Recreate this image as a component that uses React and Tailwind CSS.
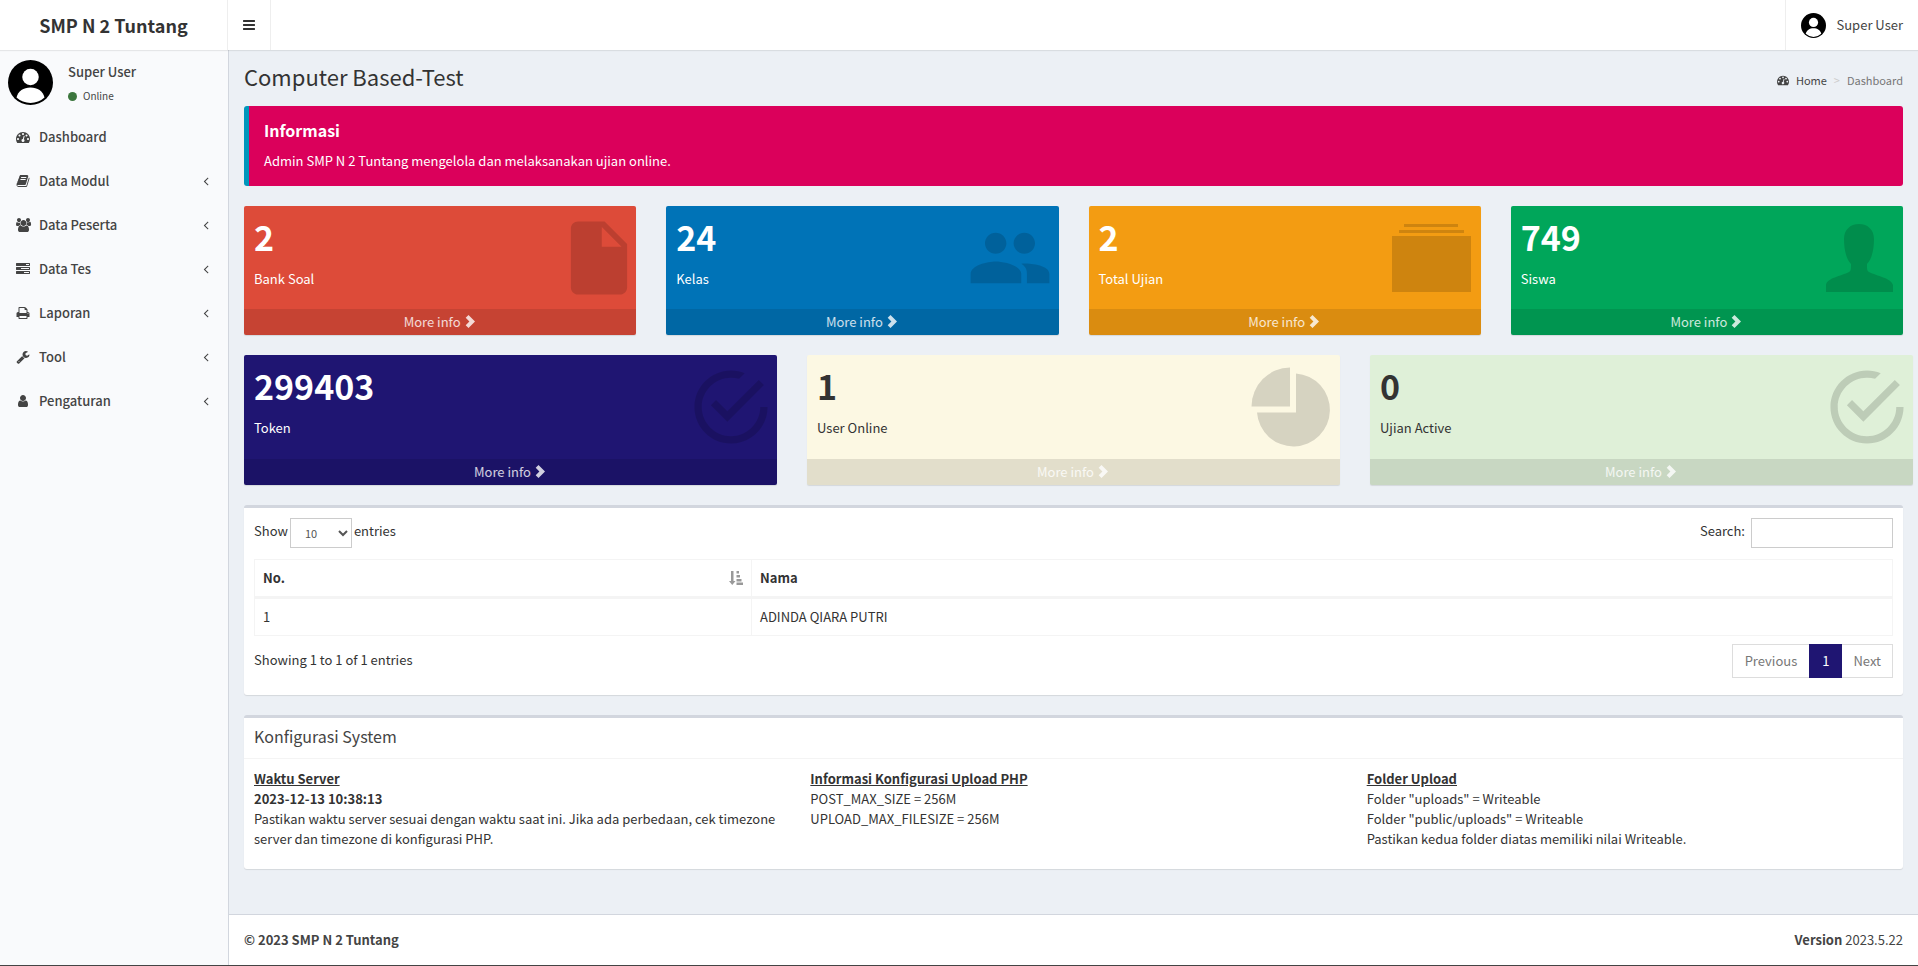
import React from "react";
import { IoMdDocument, IoMdPeople, IoMdCheckmarkCircleOutline } from "react-icons/io";

/* Sidebar glyphs, drawn on a 1792 unit grid */
const GLYPHS = {
  dashboard:
    "M384 1152q0-53-37.5-90.5t-90.5-37.5-90.5 37.5-37.5 90.5 37.5 90.5 90.5 37.5 90.5-37.5 37.5-90.5zm192-448q0-53-37.5-90.5t-90.5-37.5-90.5 37.5-37.5 90.5 37.5 90.5 90.5 37.5 90.5-37.5 37.5-90.5zm428 481l101-382q6-26-7.5-48.5t-38.5-29.5-48 6.5-30 39.5l-101 382q-60 5-107 43.5t-63 98.5q-20 77 20 146t117 89 146-20 89-117q16-60-6-117t-72-91zm660-33q0-53-37.5-90.5t-90.5-37.5-90.5 37.5-37.5 90.5 37.5 90.5 90.5 37.5 90.5-37.5 37.5-90.5zm-640-640q0-53-37.5-90.5t-90.5-37.5-90.5 37.5-37.5 90.5 37.5 90.5 90.5 37.5 90.5-37.5 37.5-90.5zm448 192q0-53-37.5-90.5t-90.5-37.5-90.5 37.5-37.5 90.5 37.5 90.5 90.5 37.5 90.5-37.5 37.5-90.5zm320 448q0 261-141 483-19 29-54 29h-1402q-35 0-54-29-141-221-141-483 0-182 71-348t191-286 286-191 348-71 348 71 286 191 191 286 71 348z",
  book: "M1703 478q40 57 18 129l-275 906q-19 64-76.5 107.5t-122.5 43.5h-923q-77 0-148.5-53.5t-99.5-131.5q-24-67-2-127 0-4 3-27t4-37q1-8-3-21.5t-3-19.5q2-11 8-21t16.5-23.5 16.5-23.5q23-38 45-91.5t30-91.5q3-10 .5-30t-.5-28q3-11 17-28t17-23q21-36 42-92t25-90q1-9-2.5-32t.5-28q4-13 22-30.5t22-22.5q19-26 42.5-84.5t27.5-96.5q1-8-3-25.5t-2-26.5q2-8 9-18t18-23 17-21q8-12 16.5-30.5t15-35 16-36 19.5-32 26.5-23.5 36-11.5 47.5 5.5l-1 3q38-9 51-9h761q74 0 114 56t18 130l-274 906q-36 119-71.5 153.5t-128.5 34.5h-869q-27 0-38 15-11 16-1 43 24 70 144 70h923q29 0 56-15.5t35-41.5l300-987q7-22 5-57 38 15 59 43zm-1064 2q-4 13 2 22.5t20 9.5h608q13 0 25.5-9.5t16.5-22.5l21-64q4-13-2-22.5t-20-9.5h-608q-13 0-25.5 9.5t-16.5 22.5zm-83 256q-4 13 2 22.5t20 9.5h608q13 0 25.5-9.5t16.5-22.5l21-64q4-13-2-22.5t-20-9.5h-608q-13 0-25.5 9.5t-16.5 22.5z",
  users:
    "M593 896q-162 5-265 128h-134q-82 0-138-40.5t-56-118.5q0-353 124-353 6 0 43.5 21t97.5 42.5 119 21.5q67 0 133-23-5 37-5 66 0 159 93 294zm1071 637q0 120-73 189.5t-194 69.5h-874q-121 0-194-69.5t-73-189.5q0-53 3.5-103.5t14-109 26.5-108.5 43-97.5 62-81 85.5-53.5 111.5-20q10 0 43 21.5t73 48 107 48 135 21.5 135-21.5 107-48 73-48 43-21.5q61 0 111.5 20t85.5 53.5 62 81 43 97.5 26.5 108.5 14 109 3.5 103.5zm-1024-1277q0 106-75 181t-181 75-181-75-75-181 75-181 181-75 181 75 75 181zm704 384q0 159-112.5 271.5t-271.5 112.5-271.5-112.5-112.5-271.5 112.5-271.5 271.5-112.5 271.5 112.5 112.5 271.5zm576 225q0 78-56 118.5t-138 40.5h-134q-103-123-265-128 93-135 93-294 0-29-5-66 66 23 133 23 59 0 119-21.5t97.5-42.5 43.5-21q124 0 124 353zm-128-609q0 106-75 181t-181 75-181-75-75-181 75-181 181-75 181 75 75 181z",
  tasks:
    "M1024 1408h640v-128h-640v128zm-384-512h1024v-128h-1024v128zm640-512h384v-128h-384v128zm512 832v256q0 26-19 45t-45 19h-1664q-26 0-45-19t-19-45v-256q0-26 19-45t45-19h1664q26 0 45 19t19 45zm0-512v256q0 26-19 45t-45 19h-1664q-26 0-45-19t-19-45v-256q0-26 19-45t45-19h1664q26 0 45 19t19 45zm0-512v256q0 26-19 45t-45 19h-1664q-26 0-45-19t-19-45v-256q0-26 19-45t45-19h1664q26 0 45 19t19 45z",
  print:
    "M448 1536h896v-256h-896v256zm0-640h896v-384h-160q-40 0-68-28t-28-68v-160h-640v640zm1152 64q0-26-19-45t-45-19-45 19-19 45 19 45 45 19 45-19 19-45zm128 0v416q0 13-9.5 22.5t-22.5 9.5h-224v160q0 40-28 68t-68 28h-960q-40 0-68-28t-28-68v-160h-224q-13 0-22.5-9.5t-9.5-22.5v-416q0-79 56.5-135.5t135.5-56.5h64v-544q0-40 28-68t68-28h672q40 0 88 20t76 48l152 152q28 28 48 76t20 88v256h64q79 0 135.5 56.5t56.5 135.5z",
  wrench:
    "M448 1472q0-26-19-45t-45-19-45 19-19 45 19 45 45 19 45-19 19-45zm644-420l-682 682q-37 37-90 37-52 0-91-37l-106-108q-38-36-38-90 0-53 38-91l681-681q39 98 114.5 173.5t173.5 114.5zm634-435q0 39-23 106-47 134-164.5 217.5t-258.5 83.5q-185 0-316.5-131.5t-131.5-316.5 131.5-316.5 316.5-131.5q58 0 121.5 16.5t107.5 46.5q16 11 16 28t-16 28l-293 169v224l193 107q5-3 79-48.5t135.5-81 70.5-35.5q15 0 23.5 10t8.5 25z",
  user: "M1536 1399q0 109-62.5 187t-150.5 78h-854q-88 0-150.5-78t-62.5-187q0-85 8.5-160.5t31.5-152 58.5-131 94-89 134.5-34.5q131 128 313 128t313-128q76 0 134.5 34.5t94 89 58.5 131 31.5 152 8.5 160.5zm-256-887q0 159-112.5 271.5t-271.5 112.5-271.5-112.5-112.5-271.5 112.5-271.5 271.5-112.5 271.5 112.5 112.5 271.5z",
  angleLeft:
    "M1203 544q0 13-10 23l-393 393 393 393q10 10 10 23t-10 23l-50 50q-10 10-23 10t-23-10l-466-466q-10-10-10-23t10-23l466-466q10-10 23-10t23 10l50 50q10 10 10 23z",
  bars: "M1664 1344v128q0 26-19 45t-45 19h-1408q-26 0-45-19t-19-45v-128q0-26 19-45t45-19h1408q26 0 45 19t19 45zm0-512v128q0 26-19 45t-45 19h-1408q-26 0-45-19t-19-45v-128q0-26 19-45t45-19h1408q26 0 45 19t19 45zm0-512v128q0 26-19 45t-45 19h-1408q-26 0-45-19t-19-45v-128q0-26 19-45t45-19h1408q26 0 45 19t19 45z",
};

const MENU = [
  { label: "Dashboard", icon: "dashboard" },
  { label: "Data Modul", icon: "book", tree: true },
  { label: "Data Peserta", icon: "users", tree: true },
  { label: "Data Tes", icon: "tasks", tree: true },
  { label: "Laporan", icon: "print", tree: true },
  { label: "Tool", icon: "wrench", tree: true },
  { label: "Pengaturan", icon: "user", tree: true },
];

const STATS = [
  { value: "2", label: "Bank Soal", Icon: IoMdDocument, place: "-right-2", tone: "bg-[#dd4b39] text-white" },
  { value: "24", label: "Kelas", Icon: IoMdPeople, place: "right-1", tone: "bg-[#0073b7] text-white" },
  { value: "2", label: "Total Ujian", Icon: AlbumsIcon, place: "right-[10px]", tone: "bg-[#f39c12] text-white" },
  { value: "749", label: "Siswa", Icon: PersonIcon, place: "right-[10px]", tone: "bg-[#00a65a] text-white" },
];

const STATUS = [
  { value: "299403", label: "Token", Icon: IoMdCheckmarkCircleOutline, place: "right-px", tone: "bg-[#1f1572] text-white" },
  { value: "1", label: "User Online", Icon: PieIcon, place: "right-1", tone: "bg-[#fcf8e3] text-[#333]" },
  { value: "0", label: "Ujian Active", Icon: IoMdCheckmarkCircleOutline, place: "right-px", tone: "-mr-[10px] bg-[#dff0d8] text-[#333]" },
];

function Glyph({ name, className }) {
  return (
    <svg viewBox="0 0 1792 1792" className={className} fill="currentColor" overflow="visible" aria-hidden="true">
      <path d={GLYPHS[name]} />
    </svg>
  );
}

function AlbumsIcon({ className }) {
  return (
    <svg viewBox="0 0 90 90" className={className} fill="currentColor" aria-hidden="true">
      <path d="M23 11H77V14H23ZM18 17H83V20H18ZM11 23H90V79H11Z" />
    </svg>
  );
}

function PersonIcon({ className }) {
  return (
    <svg viewBox="0 0 90 90" className={className} fill="currentColor" aria-hidden="true">
      <path d="M23 79V72C24 65 38 63 46 59C48 58 48 56 48 51C43 46 41 36 41 26C41 17 47 11 56 11S71 17 71 26C71 36 69 46 64 51C64 56 64 58 66 59C74 63 88 65 90 72V79Z" />
    </svg>
  );
}

function PieIcon({ className }) {
  return (
    <svg viewBox="0 0 90 90" className={className} fill="currentColor" aria-hidden="true">
      <path d="M44 5.500V44.500H5.500A39 39 0 0 1 44 5.500Z" />
      <path d="M50 11.500A36.500 36.500 0 1 1 11 50.500H50Z" />
    </svg>
  );
}

function Avatar({ className }) {
  return (
    <svg viewBox="0 0 90 90" className={className} aria-hidden="true">
      <circle cx="45" cy="45" r="45" fill="#000" />
      <circle cx="45" cy="34" r="16.500" fill="#fff" />
      <path d="M17 75C20 62 31 55 45 55S70 62 73 75A41 41 0 0 1 17 75Z" fill="#fff" />
    </svg>
  );
}

function ChevronRight() {
  return (
    <svg viewBox="0 0 14 14" className="size-[14px]" fill="currentColor" aria-hidden="true">
      <path d="M2.700 2.800 5.500 0 12 6.500 5.500 13 2.700 10.200 6.400 6.500Z" />
    </svg>
  );
}

function SortIcon() {
  return (
    <svg viewBox="0 0 14 14" className="size-[14px] text-[#999]" fill="currentColor" aria-hidden="true">
      <path d="M2 0h2.500v10H6.500L3.250 14 0 10H2ZM7.500 0h2.500v2.500H7.500ZM7.500 4h3.500v2.500H7.500ZM7.500 8h5v2.500H7.500ZM7.500 11.500h6.500V14H7.500Z" />
    </svg>
  );
}

function Header() {
  return (
    <header className="relative z-10 flex h-[50px] shrink-0 bg-white shadow-[0_1px_1px_rgba(0,0,0,0.08)]">
      <a href="#" className="flex w-[228px] items-center justify-center border-r border-[#eee] text-lg font-bold text-[#333]">
        SMP N 2 Tuntang
      </a>
      <button type="button" aria-label="Toggle navigation" className="flex w-[43px] items-center justify-center border-r border-[#eee] text-[#333]">
        <Glyph name="bars" className="size-[14px]" />
      </button>
      <a href="#" className="ml-auto flex items-center gap-[10px] border-l border-[#eee] px-[15px] text-[#444]">
        <Avatar className="size-[25px]" />
        <span>Super User</span>
      </a>
    </header>
  );
}

function Sidebar() {
  return (
    <aside className="w-[229px] shrink-0 border-r border-[#d2d6de] bg-[#f9fafc] text-[#444]">
      <div className="flex h-[65px] items-center gap-[15px] px-2">
        <Avatar className="size-[45px]" />
        <div className="pt-[3px]">
          <p className="font-medium leading-5">Super User</p>
          <a href="#" className="mt-1 flex items-center gap-[6px] text-[10px] leading-5">
            <span className="size-[9px] rounded-full bg-[#3c763d]" />
            Online
          </a>
        </div>
      </div>
      <nav>
        <ul>
          {MENU.map((item) => (
            <li key={item.label}>
              <a href="#" className="flex h-11 items-center pl-4 pr-[15px] font-medium">
                <Glyph name={item.icon} className="size-[14px]" />
                <span className="ml-[9px] flex-1">{item.label}</span>
                {item.tree && <Glyph name="angleLeft" className="size-[14px]" />}
              </a>
            </li>
          ))}
        </ul>
      </nav>
    </aside>
  );
}

function SmallBox({ value, label, Icon, place, tone }) {
  return (
    <div className={`relative flex flex-col overflow-hidden rounded-xs shadow-[0_1px_1px_rgba(0,0,0,0.1)] ${tone}`}>
      <div className="flex-1 p-[10px]">
        <h3 className="text-[34px] font-bold leading-[42px]">{value}</h3>
        <p className="mt-[11px] leading-5">{label}</p>
      </div>
      <Icon className={`absolute top-[7px] size-[90px] text-black/15 ${place}`} />
      <a href="#" className="flex h-[26px] items-center justify-center gap-[2px] bg-black/10 text-white/80">
        More info <ChevronRight />
      </a>
    </div>
  );
}

function UserTable() {
  return (
    <section className="rounded-[3px] border-t-3 border-[#d2d6de] bg-white px-[10px] pb-[17px] pt-[10px] shadow-[0_1px_1px_rgba(0,0,0,0.1)]">
      <div className="flex justify-between">
        <label className="flex gap-[2px] leading-[26px]">
          Show
          <select className="h-[30px] w-[62px] border border-[#ccc] bg-white pl-[10px] text-[11px] text-[#555]">
            <option>10</option>
            <option>25</option>
            <option>50</option>
          </select>
          entries
        </label>
        <label className="flex gap-[6px] leading-[26px]">
          Search:
          <input type="search" className="h-[30px] w-[142px] border border-[#ccc] px-[10px]" />
        </label>
      </div>
      <table className="mt-[11px] w-full border-collapse text-left">
        <thead>
          <tr>
            <th className="w-[497px] border border-b-3 border-[#f4f4f4] p-2 font-bold leading-5">
              <span className="flex items-center justify-between">
                No. <SortIcon />
              </span>
            </th>
            <th className="border border-b-3 border-[#f4f4f4] p-2 font-bold leading-5">Nama</th>
          </tr>
        </thead>
        <tbody>
          <tr>
            <td className="border border-[#f4f4f4] p-2 leading-5">1</td>
            <td className="border border-[#f4f4f4] p-2 leading-5">ADINDA QIARA PUTRI</td>
          </tr>
        </tbody>
      </table>
      <div className="mt-2 flex justify-between">
        <p className="leading-8">Showing 1 to 1 of 1 entries</p>
        <div className="flex h-[34px] text-[#777]">
          <button type="button" className="border border-r-0 border-[#ddd] px-3">Previous</button>
          <button type="button" className="bg-[#1f1572] px-[13px] text-white">1</button>
          <button type="button" className="border border-l-0 border-[#ddd] px-[11px]">Next</button>
        </div>
      </div>
    </section>
  );
}

function SystemConfig() {
  return (
    <section className="rounded-[3px] border-t-3 border-[#d2d6de] bg-white shadow-[0_1px_1px_rgba(0,0,0,0.1)]">
      <h3 className="border-b border-[#f4f4f4] px-[10px] pb-3 pt-2 text-base leading-5 text-[#444]">Konfigurasi System</h3>
      <div className="grid grid-cols-3 gap-[30px] px-[10px] pb-5 pt-[10px] leading-5">
        <div>
          <h4 className="font-bold underline">Waktu Server</h4>
          <p className="font-bold">2023-12-13 10:38:13</p>
          <p>
            Pastikan waktu server sesuai dengan waktu saat ini. Jika ada perbedaan, cek timezone
            server dan timezone di konfigurasi PHP.
          </p>
        </div>
        <div>
          <h4 className="font-bold underline">Informasi Konfigurasi Upload PHP</h4>
          <p>POST_MAX_SIZE = 256M</p>
          <p>UPLOAD_MAX_FILESIZE = 256M</p>
        </div>
        <div>
          <h4 className="font-bold underline">Folder Upload</h4>
          <p>Folder "uploads" = Writeable</p>
          <p>Folder "public/uploads" = Writeable</p>
          <p>Pastikan kedua folder diatas memiliki nilai Writeable.</p>
        </div>
      </div>
    </section>
  );
}

export default function App() {
  return (
    <div className="flex min-h-screen flex-col overflow-x-hidden border-b border-[#444] bg-[#ecf0f5] font-['Noto_Sans_CJK_SC',sans-serif] text-[13px] leading-5 text-[#333]">
      <Header />
      <div className="flex flex-1">
        <Sidebar />
        <div className="flex min-w-0 flex-1 flex-col">
          <main className="flex-1 px-[15px] pb-10">
            <div className="flex items-start justify-between pb-4 pt-3">
              <h1 className="text-[22px] leading-7">Computer Based-Test</h1>
              <nav aria-label="Breadcrumb" className="mt-2 flex items-center gap-[7px] text-[11px]">
                <a href="#" className="flex items-center gap-[7px] text-[#444]">
                  <Glyph name="dashboard" className="size-3" />
                  Home
                </a>
                <span className="text-[#ccc]">&gt;</span>
                <span className="text-[#777]">Dashboard</span>
              </nav>
            </div>
            <div className="rounded-[3px] border-l-5 border-[#0097bc] bg-[#db005b] pb-[15px] pl-[15px] pr-[30px] pt-[14px] text-white">
              <h4 className="text-base font-bold leading-5">Informasi</h4>
              <p className="mt-[11px] leading-5">Admin SMP N 2 Tuntang mengelola dan melaksanakan ujian online.</p>
            </div>
            <div className="mt-5 grid auto-rows-[129px] grid-cols-4 gap-[30px]">
              {STATS.map((box) => (
                <SmallBox key={box.label} {...box} />
              ))}
            </div>
            <div className="mb-5 mt-5 grid auto-rows-[130px] grid-cols-3 gap-[30px]">
              {STATUS.map((box) => (
                <SmallBox key={box.label} {...box} />
              ))}
            </div>
            <UserTable />
            <div className="mt-5">
              <SystemConfig />
            </div>
          </main>
          <footer className="flex justify-between border-t border-[#d2d6de] bg-white p-[15px] text-[#444]">
            <strong>© 2023 SMP N 2 Tuntang</strong>
            <span>
              <b>Version</b> 2023.5.22
            </span>
          </footer>
        </div>
      </div>
    </div>
  );
}
